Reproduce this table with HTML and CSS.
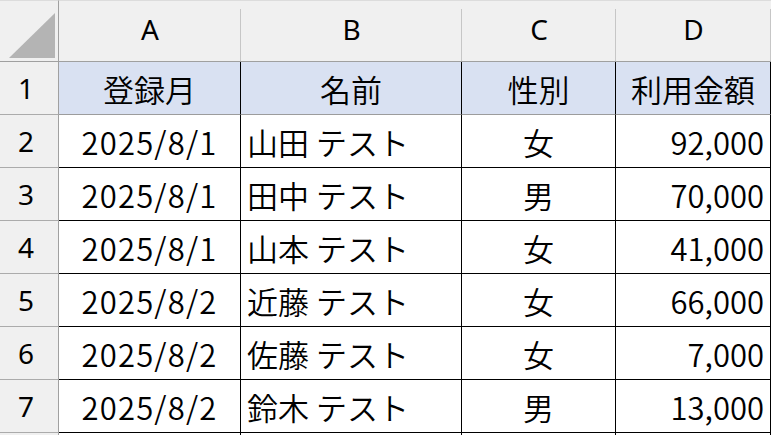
FILE: index.html
```html
<!DOCTYPE html>
<html lang="ja">
<head>
<meta charset="utf-8">
<link rel="stylesheet" href="styles.css">
</head>
<body>
<div class="sheet">
  <div class="corner"><svg class="tri" width="46" height="45" viewBox="0 0 46 45"><polygon points="0,45 46,45 46,0" fill="#b4b4b4"/></svg></div>
  <div class="colhead">A</div>
  <div class="colhead">B</div>
  <div class="colhead">C</div>
  <div class="colhead last">D</div>

  <div class="rowhead">1</div>
  <div class="cell title center">登録月</div>
  <div class="cell title center">名前</div>
  <div class="cell title center">性別</div>
  <div class="cell title center">利用金額</div>

  <div class="rowhead">2</div>
  <div class="cell center date">2025/8/1</div>
  <div class="cell left">山田 テスト</div>
  <div class="cell center">女</div>
  <div class="cell right">92,000</div>

  <div class="rowhead">3</div>
  <div class="cell center date">2025/8/1</div>
  <div class="cell left">田中 テスト</div>
  <div class="cell center">男</div>
  <div class="cell right">70,000</div>

  <div class="rowhead">4</div>
  <div class="cell center date">2025/8/1</div>
  <div class="cell left">山本 テスト</div>
  <div class="cell center">女</div>
  <div class="cell right">41,000</div>

  <div class="rowhead">5</div>
  <div class="cell center date">2025/8/2</div>
  <div class="cell left">近藤 テスト</div>
  <div class="cell center">女</div>
  <div class="cell right">66,000</div>

  <div class="rowhead">6</div>
  <div class="cell center date">2025/8/2</div>
  <div class="cell left">佐藤 テスト</div>
  <div class="cell center">女</div>
  <div class="cell right">7,000</div>

  <div class="rowhead">7</div>
  <div class="cell center date">2025/8/2</div>
  <div class="cell left">鈴木 テスト</div>
  <div class="cell center">男</div>
  <div class="cell right">13,000</div>

  <div class="rowhead"></div>
  <div class="cell"></div>
  <div class="cell"></div>
  <div class="cell"></div>
  <div class="cell"></div>
</div>
</body>
</html>
```

FILE: styles.css
```css
html, body {
  margin: 0;
  padding: 0;
  background: #ffffff;
  overflow: hidden;
}

.sheet {
  display: grid;
  grid-template-columns: 59px 182px 221px 154px 155px;
  grid-template-rows: 62px repeat(8, 53px);
  width: 771px;
  height: 435px;
  overflow: hidden;
  font-family: "Noto Sans CJK JP", "Noto Sans", sans-serif;
  color: #000;
}

.corner {
  background: #f0f0f0;
  border-top: 1px solid #dcdcdc;
  border-right: 1px solid #a0a0a0;
  border-bottom: 1px solid #a0a0a0;
  display: flex;
  align-items: flex-end;
  justify-content: flex-end;
  padding: 0 3px 3px 0;
}

.tri {
  display: block;
}

.colhead {
  background:
    linear-gradient(#c6c6c6, #c6c6c6) right bottom / 1px 52px no-repeat,
    #f0f0f0;
  border-top: 1px solid #dcdcdc;
  border-bottom: 1px solid #a0a0a0;
  display: flex;
  align-items: center;
  justify-content: center;
  font-family: "Noto Sans", "Noto Sans CJK JP", sans-serif;
  font-size: 28px;
  line-height: 1;
  padding-bottom: 5px;
}

.rowhead {
  background: #f0f0f0;
  border-right: 1px solid #a0a0a0;
  border-bottom: 1px solid #ababab;
  display: flex;
  align-items: center;
  justify-content: center;
  font-family: "Noto Sans", "Noto Sans CJK JP", sans-serif;
  font-size: 28px;
  line-height: 1;
  padding-right: 6px;
}

.cell {
  border-right: 1px solid #000;
  border-bottom: 1px solid #000;
  display: flex;
  align-items: center;
  font-size: 31px;
  font-weight: 350;
  line-height: 1;
  white-space: nowrap;
  background: #fff;
}

.title {
  background: #d9e1f2;
  border-bottom-color: #9c9c9c;
}

.date { letter-spacing: 1.2px; }

.center { justify-content: center; }
.left { justify-content: flex-start; padding-left: 6px; }
.right { justify-content: flex-end; padding-right: 6px; }
```
